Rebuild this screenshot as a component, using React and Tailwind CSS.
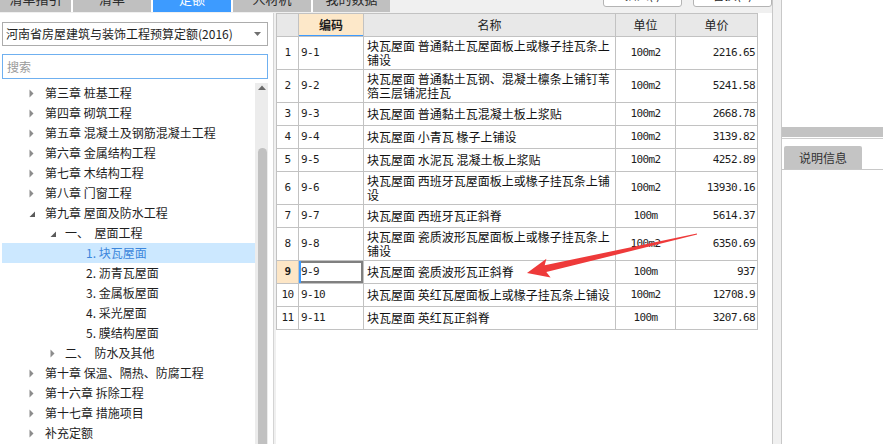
const cjk = "font-['Noto_Sans_CJK_SC',sans-serif]";
const mono = "font-['DejaVu_Sans_Mono','Liberation_Mono',monospace]";

const tabs = [
  { label: '清单指引', w: 'w-[71px]' },
  { label: '清单', w: 'w-[78px]' },
  { label: '定额', w: 'w-[78px]', active: true },
  { label: '人材机', w: 'w-[78px]' },
  { label: '我的数据', w: 'w-[77px]' },
];

const tree = [
  { level: 1, state: 'closed', label: '第三章 桩基工程' },
  { level: 1, state: 'closed', label: '第四章 砌筑工程' },
  { level: 1, state: 'closed', label: '第五章 混凝土及钢筋混凝土工程' },
  { level: 1, state: 'closed', label: '第六章 金属结构工程' },
  { level: 1, state: 'closed', label: '第七章 木结构工程' },
  { level: 1, state: 'closed', label: '第八章 门窗工程' },
  { level: 1, state: 'open', label: '第九章 屋面及防水工程' },
  { level: 2, state: 'open', label: '一、\u00a0\u00a0屋面工程' },
  { level: 3, label: '1. 块瓦屋面', selected: true },
  { level: 3, label: '2. 沥青瓦屋面' },
  { level: 3, label: '3. 金属板屋面' },
  { level: 3, label: '4. 采光屋面' },
  { level: 3, label: '5. 膜结构屋面' },
  { level: 2, state: 'closed', label: '二、\u00a0\u00a0防水及其他' },
  { level: 1, state: 'closed', label: '第十章 保温、隔热、防腐工程' },
  { level: 1, state: 'closed', label: '第十六章 拆除工程' },
  { level: 1, state: 'closed', label: '第十七章 措施项目' },
  { level: 1, state: 'closed', label: '补充定额' },
];

const rows = [
  { n: 1, code: '9-1', name: ['块瓦屋面 普通黏土瓦屋面板上或椽子挂瓦条上', '铺设'], unit: '100m2', price: '2216.65' },
  { n: 2, code: '9-2', name: ['块瓦屋面 普通黏土瓦钢、混凝土檩条上铺钉苇', '箔三层铺泥挂瓦'], unit: '100m2', price: '5241.58' },
  { n: 3, code: '9-3', name: ['块瓦屋面 普通黏土瓦混凝土板上浆贴'], unit: '100m2', price: '2668.78' },
  { n: 4, code: '9-4', name: ['块瓦屋面 小青瓦 椽子上铺设'], unit: '100m2', price: '3139.82' },
  { n: 5, code: '9-5', name: ['块瓦屋面 水泥瓦 混凝土板上浆贴'], unit: '100m2', price: '4252.89' },
  { n: 6, code: '9-6', name: ['块瓦屋面 西班牙瓦屋面板上或椽子挂瓦条上铺', '设'], unit: '100m2', price: '13930.16' },
  { n: 7, code: '9-7', name: ['块瓦屋面 西班牙瓦正斜脊'], unit: '100m', price: '5614.37' },
  { n: 8, code: '9-8', name: ['块瓦屋面 瓷质波形瓦屋面板上或椽子挂瓦条上', '铺设'], unit: '100m2', price: '6350.69' },
  { n: 9, code: '9-9', name: ['块瓦屋面 瓷质波形瓦正斜脊'], unit: '100m', price: '937', current: true },
  { n: 10, code: '9-10', name: ['块瓦屋面 英红瓦屋面板上或椽子挂瓦条上铺设'], unit: '100m2', price: '12708.9' },
  { n: 11, code: '9-11', name: ['块瓦屋面 英红瓦正斜脊'], unit: '100m', price: '3207.68' },
];

function Caret({ state }) {
  if (state === 'open') {
    return (
      <svg width="7" height="7" viewBox="0 0 7 7" className="mt-[2px]">
        <path d="M6 0.5 L6 6 L0.5 6 Z" fill="#5a5a5a" />
      </svg>
    );
  }
  return (
    <svg width="5" height="9" viewBox="0 0 5 9">
      <path d="M0.5 0.5 L4.5 4.5 L0.5 8.5 Z" fill="#8c8c8c" />
    </svg>
  );
}

function TreeRow({ level, state, label, selected }) {
  const pad = level === 1 ? 'pl-[27px]' : level === 2 ? 'pl-[48px]' : 'pl-[84px]';
  return (
    <div
      className={`flex h-[20px] items-center whitespace-nowrap text-[12px] ${pad} ${
        selected ? 'bg-[#cce8ff] text-[#3b86dc]' : 'text-[#1e1e1e]'
      }`}
    >
      {level < 3 ? (
        <span className={`flex shrink-0 items-center ${level === 1 ? 'w-[16px]' : 'w-[15px]'}`}>
          <Caret state={state} />
        </span>
      ) : null}
      <span>{label}</span>
    </div>
  );
}

function LeftPanel() {
  return (
    <div className={`flex w-[273px] flex-col bg-white pl-[2px] pr-[5px] ${cjk}`}>
      <div className="mt-[9px] flex h-[24px] items-center justify-between border border-[#acacac] bg-white pl-[3px] pr-[6px]">
        <span className="text-[12px] text-[#1e1e1e]">河南省房屋建筑与装饰工程预算定额(2016)</span>
        <svg width="7" height="4" viewBox="0 0 7 4">
          <path d="M0 0 L7 0 L3.5 4 Z" fill="#707070" />
        </svg>
      </div>
      <div className="mt-[8px] flex h-[25px] items-center border border-[#6fb0f0] bg-white pl-[4px]">
        <span className="text-[12px] text-[#9a9a9a]">搜索</span>
      </div>
      <div className="mt-[4px] flex min-h-0 flex-1 overflow-hidden">
        <div className="flex-1">
          {tree.map((t, i) => (
            <TreeRow key={i} {...t} />
          ))}
        </div>
        <div className="flex w-[13px] flex-col items-center bg-[#ececec]">
          <svg width="8" height="5" viewBox="0 0 8 5" className="mt-[2px]">
            <path d="M0 5 L4 0.5 L8 5 Z" fill="#6a6a6a" />
          </svg>
          <div className="ml-[2px] mt-[58px] w-[9px] flex-1 rounded-t-full bg-[#c1c1c1]" />
        </div>
      </div>
    </div>
  );
}

function DataTable() {
  const cell = 'border border-[#c2c2c2]';
  const num = `text-[11px] tracking-[-0.6px] text-[#1e1e1e] ${mono}`;
  return (
    <table className={`table-fixed border-collapse ${cjk}`}>
      <colgroup>
        <col className="w-[22px]" />
        <col className="w-[65px]" />
        <col className="w-[252px]" />
        <col className="w-[60px]" />
        <col className="w-[82px]" />
      </colgroup>
      <thead>
        <tr className="h-[23px] text-[12px] text-[#1e1e1e]">
          <th className={`${cell} bg-[#e8e8e8]`} />
          <th className={`${cell} bg-[#fde8c9] font-bold shadow-[inset_0_-1px_0_#3d9bff]`}>编码</th>
          <th className={`${cell} bg-[#e8e8e8] font-normal`}>名称</th>
          <th className={`${cell} bg-[#e8e8e8] font-normal`}>单位</th>
          <th className={`${cell} bg-[#e8e8e8] font-normal`}>单价</th>
        </tr>
      </thead>
      <tbody>
        {rows.map((r) => (
          <tr key={r.n} className={r.name.length > 1 ? 'h-[33px]' : 'h-[23px]'}>
            <td className={`${cell} text-center ${num} ${r.current ? 'bg-[#fde6c6] font-bold' : 'bg-white'}`}>{r.n}</td>
            <td
              className={`${cell} pl-[2px] ${num} ${
                r.current ? 'shadow-[inset_2px_0_0_#3d9bff,inset_0_0_0_2px_#808080]' : ''
              }`}
            >
              {r.code}
            </td>
            <td className={`${cell} overflow-hidden whitespace-nowrap pl-[3px] text-[12px] leading-[14px] text-[#111]`}>
              {r.name.map((line, i) => (
                <div key={i}>{line}</div>
              ))}
            </td>
            <td className={`${cell} text-center ${num}`}>{r.unit}</td>
            <td className={`${cell} pr-[2px] text-right ${num}`}>{r.price}</td>
          </tr>
        ))}
      </tbody>
    </table>
  );
}

function RightPanel() {
  return (
    <div className={`flex w-[101px] flex-col bg-white ${cjk}`}>
      <div className="h-[127px]" />
      <div className="h-[10px] bg-[#c3c3c3]" />
      <div className="mt-[1px] h-[1px] bg-[#cfcfcf]" />
      <div className="mt-[7px] flex h-[24px] border-b border-[#c8c8c8]">
        <div className="ml-[2px] flex w-[78px] items-center justify-center rounded-t-[2px] bg-[#c4c4c4] text-[12px] text-[#333]">
          说明信息
        </div>
      </div>
    </div>
  );
}

export default function App() {
  return (
    <div className="relative flex h-[444px] w-[883px] overflow-hidden bg-[#f0f0f0]">
      <div className="flex w-[772px] flex-col">
        <div className={`flex h-[13px] items-start justify-between ${cjk}`}>
          <div className="flex h-[12px] gap-[2px] bg-white">
            {tabs.map((t) => (
              <div
                key={t.label}
                className={`${t.w} h-[12px] overflow-hidden ${t.active ? 'bg-[#3d9bff] text-white' : 'bg-[#c0c0c0] text-[#2a2a2a]'}`}
              >
                <div className="-mt-[13px] flex h-[24px] items-center justify-center text-[13px]">{t.label}</div>
              </div>
            ))}
          </div>
          <div className="flex gap-[11px]">
            {['插入(I)', '替换(R)'].map((b) => (
              <div key={b} className="h-[7px] w-[79px] overflow-hidden">
                <div className="-mt-[17px] flex h-[24px] items-center justify-center rounded-[3px] border border-[#b4b4b4] bg-white text-[12px] text-[#222]">
                  {b}
                </div>
              </div>
            ))}
          </div>
        </div>
        <div className="flex min-h-0 flex-1">
          <LeftPanel />
          <div className="w-[3px] border-l border-[#d4d4d4] bg-[#f0f0f0]" />
          <div className="flex-1 overflow-hidden bg-white">
            <DataTable />
          </div>
        </div>
      </div>
      <div className="w-[10px] border-x border-[#c8c8c8] bg-[#f0f0f0]" />
      <RightPanel />
      <svg className="pointer-events-none absolute left-0 top-0" width="883" height="444" viewBox="0 0 883 444">
        <polygon
          points="527,273 550.6,277.4 546.3,272.1 697.1,234.6 696.9,233.4 544.7,265.3 546.4,258.8"
          fill="#ee3a3a"
        />
      </svg>
    </div>
  );
}
